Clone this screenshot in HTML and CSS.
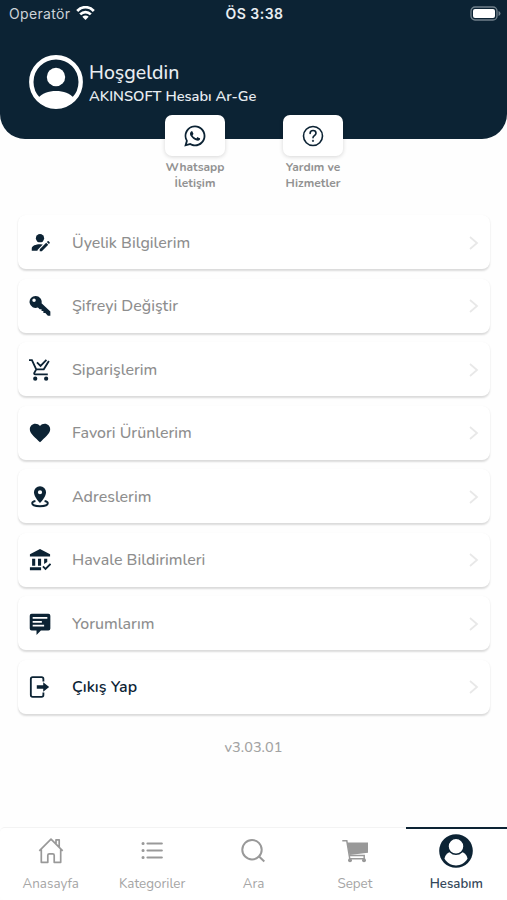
FILE: index.html
```html
<!DOCTYPE html>
<html lang="tr">
<head>
<meta charset="utf-8">
<meta name="viewport" content="width=device-width, initial-scale=1">
<title>Hesabım</title>
<link rel="stylesheet" href="styles.css">
</head>
<body>
<div class="app">
  <header class="header">
    <div class="status">
      <div class="carrier"><span>Operatör</span>
        <svg width="19" height="14" viewBox="0 0 19 14" fill="none" stroke="#fff" stroke-width="2.700"><path d="M1.2 5C6-.1 13-.1 17.8 5"/><path d="M4.2 8.400c3.100-3.100 7.500-3.100 10.600 0"/><path d="M9.500 14 6.300 10.800c1.800-1.700 4.600-1.700 6.400 0z" fill="#fff" stroke="none"/></svg>
      </div>
      <div class="clock">ÖS 3:38</div>
      <div class="battery"><svg width="31" height="15" viewBox="0 0 31 15"><rect x="1" y="1" width="26" height="13" rx="4" fill="none" stroke="#70808b" stroke-width="1.300"/><rect x="3" y="3" width="22" height="9" rx="2" fill="#fff"/><path d="M28.500 5v5q2-.7 2-2.500t-2-2.500" fill="#70808b"/></svg></div>
    </div>
    <div class="profile">
      <svg width="54" height="54" viewBox="0 0 54 54"><circle cx="27" cy="27" r="24.700" fill="none" stroke="#fff" stroke-width="4.400"/><circle cx="27" cy="22" r="9.200" fill="#fff"/><path d="M9 43c4-4.500 10.500-7 18-7s14 2.500 18 7c-4 5.500-10.500 9-18 9S13 48.500 9 43" fill="#fff"/></svg>
      <div class="who"><div class="hello">Hoşgeldin</div><div class="name">AKINSOFT Hesabı Ar-Ge</div></div>
    </div>
  </header>

  <section class="quick">
    <a class="shortcut">
      <span class="tile"><svg width="24" height="24" viewBox="0 0 24 24" fill="#0c2334"><path d="M12.040 1.500C6.300 1.500 1.630 6.170 1.630 11.910c0 1.750.46 3.450 1.320 4.950L1.300 22.500l5.750-1.500c1.450.79 3.280 1.320 4.990 1.320 5.740 0 10.410-4.670 10.410-10.410S17.780 1.500 12.040 1.500m0 1.850a8.560 8.560 0 1 1-4.350 15.930l-.3-.180-3.440.9.910-3.280-.2-.310A8.560 8.560 0 0 1 12.040 3.350M8.530 7.330c-.16 0-.43.060-.66.310-.22.250-.87.860-.87 2.070 0 1.220.890 2.390 1 2.560.140.170 1.760 2.670 4.250 3.730.590.270 1.050.420 1.410.530.590.190 1.130.160 1.560.100.480-.070 1.460-.6 1.670-1.180s.210-1.070.150-1.180c-.070-.100-.230-.160-.480-.270-.250-.140-1.470-.740-1.690-.820-.230-.080-.370-.120-.560.120-.160.250-.640.810-.780.970-.150.170-.290.190-.530.070-.26-.13-1.060-.39-2-1.230-.74-.66-1.230-1.470-1.380-1.720-.12-.24-.01-.39.110-.5.110-.110.270-.290.370-.44.130-.140.170-.250.250-.410.080-.170.040-.310-.020-.430-.060-.110-.560-1.350-.770-1.840-.200-.480-.400-.420-.560-.430z"/></svg></span>
      <span class="caption">Whatsapp<br>İletişim</span>
    </a>
    <a class="shortcut">
      <span class="tile"><svg width="24" height="24" viewBox="0 0 24 24" fill="none" stroke="#0c2334" stroke-width="1.600" stroke-linecap="round"><circle cx="12" cy="12" r="9.500"/><path d="M9.100 9.400C9.100 5.500 15 5.700 15 9.200c0 2.400-3 2.400-3 4.500"/><circle cx="12" cy="16.800" r=".35" fill="#0c2334"/></svg></span>
      <span class="caption">Yardım ve<br>Hizmetler</span>
    </a>
  </section>

  <main class="menu">
    <a class="row"><svg class="icon" viewBox="0 0 24 24"><circle cx="12" cy="6.800" r="4.500"/><path d="M3 20.500V18C3 15 7.500 13.300 12 13.300q1.700 0 3 .3L9.300 19.500v1zM11.700 21v-2.300l7-7 2.300 2.300-7 7zM19.500 11l.8-.8q.6-.5 1.200 0l1 1q.5.600 0 1.200l-.8.8z"/></svg><span class="label">Üyelik Bilgilerim</span><svg class="chev" viewBox="0 0 12 16"><path d="m2 2 7 6-7 6"/></svg></a>
    <a class="row"><svg class="icon" viewBox="0 0 24 24"><path fill-rule="evenodd" d="M7.300 1a6.600 6.600 0 1 0 2.400 12.700l2 1.800h2v2h2v2h2.100l2.800 3H23.300v-4.600l-9.600-8.900A6.600 6.600 0 0 0 7.300 1M5.500 3.800a1.900 1.900 0 1 1 0 3.800 1.900 1.900 0 0 1 0-3.800"/></svg><span class="label">Şifreyi Değiştir</span><svg class="chev" viewBox="0 0 12 16"><path d="m2 2 7 6-7 6"/></svg></a>
    <a class="row"><svg class="icon line" viewBox="0 0 24 24"><path d="M0 1.300h3.200l4.700 10h8.200l5.600-9M7.900 11.300l-2.200 4q-.3 1.400 1 1.400H20.500M8.700 3.700l3.900 3.800L19 1"/><circle class="dot" cx="6.800" cy="21.500" r="2.300"/><circle class="dot" cx="18.700" cy="21.500" r="2.300"/></svg><span class="label">Siparişlerim</span><svg class="chev" viewBox="0 0 12 16"><path d="m2 2 7 6-7 6"/></svg></a>
    <a class="row"><svg class="icon" viewBox="0 0 24 24"><path d="m12 22-1.600-1.400C4.600 15.300.9 12 .9 8c0-3.400 2.600-6 6-6 1.900 0 3.900.9 5.100 2.400C13.200 2.900 15.200 2 17.100 2c3.400 0 6 2.600 6 6 0 4-3.700 7.300-9.500 12.600z"/></svg><span class="label">Favori Ürünlerim</span><svg class="chev" viewBox="0 0 12 16"><path d="m2 2 7 6-7 6"/></svg></a>
    <a class="row"><svg class="icon" viewBox="0 0 24 24"><path fill-rule="evenodd" d="M12 .3a6.600 6.600 0 0 0-6.600 6.600C5.400 12 12 18.700 12 18.700s6.600-6.700 6.600-11.800A6.600 6.600 0 0 0 12 .3m0 4.200a2.300 2.300 0 1 1 0 4.600 2.300 2.300 0 0 1 0-4.600"/><path d="M7 16.300c-2.400.5-3.500 1.300-3.500 2.400 0 2 3.800 3.400 8.500 3.400s8.500-1.400 8.500-3.400c0-1.100-1.100-1.900-3.500-2.400" fill="none" stroke="#0c2334" stroke-width="2.100"/></svg><span class="label">Adreslerim</span><svg class="chev" viewBox="0 0 12 16"><path d="m2 2 7 6-7 6"/></svg></a>
    <a class="row"><svg class="icon" viewBox="0 0 24 24"><path d="M12 0 1 5.800v2.500h22V5.800zM3.400 10.500h3.400v7.700H3.400zm6.400 0h3.400v7.700H9.800zM16.500 10.500h3.400v3.700l-3.400 2.200zM1 19.900h12.200v3.300H1z"/><path d="m15.200 19 2.800 2.800 5.500-5.600" fill="none" stroke="#0c2334" stroke-width="2"/></svg><span class="label">Havale Bildirimleri</span><svg class="chev" viewBox="0 0 12 16"><path d="m2 2 7 6-7 6"/></svg></a>
    <a class="row"><svg class="icon" viewBox="0 0 24 24"><path fill-rule="evenodd" d="M2.900.8h18.300q2.100 0 2.100 2.100v14q0 2.100-2.100 2.100H13L8.200 24v-5H2.900Q.8 19 .8 16.900v-14Q.8.800 2.900.8M4 4.300v1.900h16V4.300zm0 4.300v1.900h10V8.600zm0 4.300v1.900h12.500v-1.900z"/></svg><span class="label">Yorumlarım</span><svg class="chev" viewBox="0 0 12 16"><path d="m2 2 7 6-7 6"/></svg></a>
    <a class="row"><svg class="icon line" viewBox="0 0 24 24"><path d="M15.700 6V3.200q0-2-2-2H4q-2 0-2 2v17.600q0 2 2 2h9.700q2 0 2-2V18"/><path class="dot" d="M8.500 10h7V6.700l6.500 5.300-6.500 5.300V14h-7z"/></svg><span class="label exit">Çıkış Yap</span><svg class="chev" viewBox="0 0 12 16"><path d="m2 2 7 6-7 6"/></svg></a>
  </main>
  <div class="version">v3.03.01</div>

  <nav class="tabs">
    <a class="tab"><svg width="26" height="26" viewBox="0 0 26 26" fill="none" stroke="#999" stroke-width="1.700" stroke-linejoin="round"><path d="M3.300 11.500v12.800h6.500v-7q0-1.500 1.500-1.500h3.400q1.500 0 1.500 1.500v7h6.500V11.500M1.300 12.800 13 1.200l11.700 11.600M18 6V1.800h3.200v7.400"/></svg><span>Anasayfa</span></a>
    <a class="tab"><svg width="26" height="26" viewBox="0 0 26 26" stroke="#999" stroke-width="2.200" stroke-linecap="round"><path d="M8.500 5.500h14.300M8.500 12.500h14.300M8.500 19.500h14.300"/><path d="M4 5.500h.1M4 12.500h.1M4 19.500h.1" stroke-width="3"/></svg><span>Kategoriler</span></a>
    <a class="tab"><svg width="26" height="26" viewBox="0 0 26 26" fill="none" stroke="#999" stroke-width="2"><circle cx="12" cy="11.700" r="9.700"/><path d="m18.800 18.300 5.500 5.200"/></svg><span>Ara</span></a>
    <a class="tab"><svg width="28" height="26" viewBox="0 0 28 26"><path fill="#999" d="M6 4.500h21v10.300L8.500 17z"/><path d="M1.300 2.800h4.500l3 18H24M8.500 17.500h14.700v4" fill="none" stroke="#999" stroke-width="1.500"/><circle cx="9" cy="22.300" r="2" fill="#999"/><circle cx="23" cy="22.300" r="2" fill="#999"/></svg><span>Sepet</span></a>
    <a class="tab active"><svg width="34" height="34" viewBox="0 0 34 34"><circle cx="17" cy="17" r="16.800" fill="#0c2334"/><path d="M10.200 18.300h13.600q4.200 2 4.700 6.500C26 29 21.500 31.500 17 31.500S8 29 5.500 24.800q.5-4.500 4.700-6.500" fill="#fff"/><circle cx="17" cy="12.300" r="8" fill="#fff" stroke="#0c2334" stroke-width="1.500"/></svg><span>Hesabım</span></a>
  </nav>
</div>
</body>
</html>
```
FILE: styles.css
```css
* { box-sizing: border-box; }
body { margin: 0; background: #fff; font-family: Nunito, "Noto Sans", sans-serif; }
.app { width: 507px; height: 900px; display: flex; flex-direction: column; overflow: hidden; background: #fefefe; }
.header { height: 139px; flex: none; background: #0c2334; color: #e8edf1; border-radius: 0 0 25px 25px; }
.status { height: 28px; padding: 0 6px 0 9px; display: grid; grid-template-columns: 1fr auto 1fr; align-items: center; font-family: Inter, sans-serif; font-size: 14px; }
.carrier { display: flex; align-items: center; gap: 6px; letter-spacing: .35px; color: #ccd3d8; margin-top: -1px; }
.carrier svg { margin-top: -2px; }
.clock { font-weight: 600; letter-spacing: .5px; margin: -1px 1px 0 0; }
.battery { display: flex; justify-content: flex-end; margin-top: -1px; }
.profile { display: flex; gap: 6px; padding: 27px 0 0 29px; }
.who { padding-top: 5px; white-space: nowrap; }
.hello { font-size: 19.500px; line-height: 25px; font-weight: 500; }
.name { font-size: 14.650px; line-height: 22px; font-weight: 600; }
.quick { display: flex; justify-content: center; gap: 58px; margin-top: -24px; padding-left: 1px; height: 100px; flex: none; }
.shortcut { width: 60px; display: flex; flex-direction: column; align-items: center; }
.tile { width: 60px; height: 41px; flex: none; border-radius: 7px; background: #fff; box-shadow: 0 1px 4px rgba(0,0,0,.16); display: flex; align-items: center; justify-content: center; }
.caption { margin-top: 2.500px; color: #929292; font-size: 12px; font-weight: 700; line-height: 16.500px; text-align: center; white-space: nowrap; }
.menu { display: flex; flex-direction: column; gap: 9.500px; padding: 0 17px 0 18px; }
.row { height: 54px; display: flex; align-items: center; background: #fff; border-radius: 8px; padding: 1px 10px 0 11px; box-shadow: 0 1.500px 2px rgba(0,0,0,.14); }
.icon { width: 22px; height: 22px; fill: #0c2334; flex: none; }
.line { fill: none; stroke: #0c2334; stroke-width: 2; overflow: visible; }
.line .dot { fill: #0c2334; stroke: none; }
.label { margin-left: 21px; color: #8e8e8e; font-size: 15.950px; font-weight: 500; white-space: nowrap; }
.exit { color: #0c2334; font-weight: 600; }
.chev { width: 12px; height: 16px; margin-left: auto; fill: none; stroke: #e8e8e8; stroke-width: 1.800; }
.version { margin-top: 22px; text-align: center; color: #a3a3a3; font-size: 14.500px; font-weight: 500; line-height: 22px; }
.tabs { height: 73px; flex: none; margin-top: auto; display: grid; grid-template-columns: repeat(5, 1fr); border-top: 1px solid #f3f3f3; border-radius: 5px 0 0 5px; background: #fff; }
.tab { display: flex; flex-direction: column; align-items: center; padding-top: 10px; color: #a5a5a5; font-size: 13.400px; line-height: 18px; }
.tab span { margin-top: 11px; }
.active { margin-top: -1px; border-top: 2px solid #0c2334; color: #34475a; font-size: 13.200px; font-weight: 600; padding-top: 5px; }
.active span { margin-top: 7px; }
```
